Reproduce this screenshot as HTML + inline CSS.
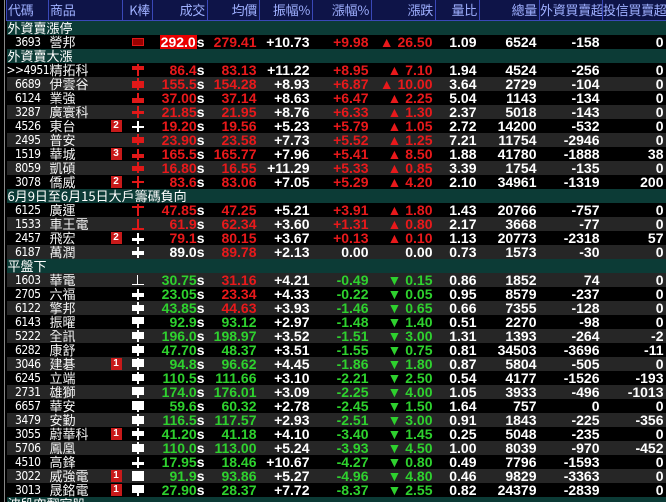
<!DOCTYPE html>
<html><head><meta charset="utf-8">
<style>
body{margin:0;background:#000;width:666px;height:502px;overflow:hidden;font-family:"Liberation Sans","Noto Sans CJK TC",sans-serif;}
#wrap{position:absolute;left:0;top:0;width:666px;height:502px;background:#000;overflow:hidden}
#lb{position:absolute;left:4px;top:0;width:1px;height:502px;background:#888}
table{position:absolute;left:6px;top:0;border-collapse:collapse;table-layout:fixed;width:660px}
tr{height:14px}
td{height:14px;padding:0 3px 0 0;white-space:nowrap;overflow:hidden;font-size:14px;font-weight:bold;color:#fff;text-align:right;line-height:14px}
tr.h{height:20px}
tr.h td{height:19px;background:#0e1448;color:#9fb0ff;font-weight:normal;font-size:13px;line-height:19px;border:1px solid #3a48b8;border-top:none;padding-right:2px;font-family:"Noto Sans CJK TC",sans-serif;letter-spacing:-0.3px}
tr.h td.l{text-align:left;padding-left:1px}
tr.s td{background:#0c3b36;color:#fff;font-weight:normal;text-align:left;padding-left:1px;font-family:"Noto Sans CJK TC",sans-serif;font-size:13px;line-height:14px}
tr.g td{background:#262626}
td.c{font-weight:normal;font-size:12px;color:#fff;text-align:right;padding-right:8px;font-family:"DejaVu Sans Condensed",sans-serif;letter-spacing:-0.5px}
td.n{font-weight:normal;text-align:left;position:relative;padding-left:1px;font-family:"Noto Sans CJK TC",sans-serif;font-size:13px;line-height:14px;color:#f4f4f4}
td.k{text-align:center;padding:0}
.b{position:absolute;left:62px;top:1px;width:11px;height:12px;background:#c81a1a;color:#fff;font-size:10px;font-weight:bold;line-height:12px;text-align:center;font-family:"Liberation Sans",sans-serif}
.r{color:#e8191b}.gr{color:#2ed12e}.w{color:#fff}
.s{color:#fff}
.hl{background:#e80000;color:#fff;padding:0 1px}
svg{display:block;margin:0 auto}
</style></head><body><div id="wrap"><div id="lb"></div>
<table>
<colgroup><col style="width:42px"><col style="width:74px"><col style="width:30px"><col style="width:55px"><col style="width:52px"><col style="width:53px"><col style="width:59px"><col style="width:64px"><col style="width:44px"><col style="width:60px"><col style="width:63px"><col style="width:64px"></colgroup>
<tr class="h"><td class="l">代碼</td><td class="l">商品</td><td>K棒</td><td>成交</td><td>均價</td><td>振幅%</td><td>漲幅%</td><td>漲跌</td><td>量比</td><td>總量</td><td>外資買賣超</td><td>投信買賣超</td></tr>
<tr class="s"><td colspan="12">外資賣漲停</td></tr>
<tr><td class="c">3693</td><td class="n">營邦</td><td class="k"><svg width="14" height="12"><rect x="1.5" y="2.5" width="11" height="7" fill="#900" stroke="#e01818"/></svg></td><td><span class="hl">292.0</span><span class="s">s</span></td><td class="r">279.41</td><td>+10.73</td><td class="r">+9.98</td><td class="r">▲ 26.50</td><td>1.09</td><td>6524</td><td>-158</td><td>0</td></tr>
<tr class="s"><td colspan="12">外資賣大漲</td></tr>
<tr><td class="c">&gt;&gt;4951</td><td class="n">精拓科</td><td class="k"><svg width="14" height="12"><rect x="1" y="2" width="12" height="4" fill="#e01818"/><rect x="6" y="0" width="2" height="12" fill="#e01818"/></svg></td><td class="r">86.4<span class="s">s</span></td><td class="r">83.13</td><td>+11.22</td><td class="r">+8.95</td><td class="r">▲ 7.10</td><td>1.94</td><td>4524</td><td>-256</td><td>0</td></tr>
<tr class="g"><td class="c">6689</td><td class="n">伊雲谷</td><td class="k"><svg width="14" height="12"><rect x="6" y="0" width="2" height="12" fill="#e01818"/><rect x="1" y="3" width="12" height="7" fill="#e01818"/></svg></td><td class="r">155.5<span class="s">s</span></td><td class="r">154.28</td><td>+8.93</td><td class="r">+6.87</td><td class="r">▲ 10.00</td><td>3.64</td><td>2729</td><td>-104</td><td>0</td></tr>
<tr><td class="c">6124</td><td class="n">業強</td><td class="k"><svg width="14" height="12"><rect x="6" y="1" width="2" height="10" fill="#e01818"/><rect x="1" y="6" width="12" height="5" fill="#e01818"/></svg></td><td class="r">37.00<span class="s">s</span></td><td class="r">37.14</td><td>+8.63</td><td class="r">+6.47</td><td class="r">▲ 2.25</td><td>5.04</td><td>1143</td><td>-134</td><td>0</td></tr>
<tr class="g"><td class="c">3287</td><td class="n">廣寰科</td><td class="k"><svg width="14" height="12"><rect x="6" y="0" width="2" height="12" fill="#e01818"/><rect x="1" y="5" width="12" height="3" fill="#e01818"/></svg></td><td class="r">21.85<span class="s">s</span></td><td class="r">21.95</td><td>+8.76</td><td class="r">+6.33</td><td class="r">▲ 1.30</td><td>2.37</td><td>5018</td><td>-143</td><td>0</td></tr>
<tr><td class="c">4526</td><td class="n">東台<span class="b">2</span></td><td class="k"><svg width="14" height="12"><rect x="6" y="1" width="2" height="11" fill="#fff"/><rect x="1" y="6" width="12" height="2" fill="#fff"/></svg></td><td class="r">19.20<span class="s">s</span></td><td class="r">19.56</td><td>+5.23</td><td class="r">+5.79</td><td class="r">▲ 1.05</td><td>2.72</td><td>14200</td><td>-532</td><td>0</td></tr>
<tr class="g"><td class="c">2495</td><td class="n">普安</td><td class="k"><svg width="14" height="12"><rect x="6" y="0" width="2" height="11" fill="#e01818"/><rect x="1" y="3" width="12" height="6" fill="#e01818"/></svg></td><td class="r">23.90<span class="s">s</span></td><td class="r">23.58</td><td>+7.73</td><td class="r">+5.52</td><td class="r">▲ 1.25</td><td>7.21</td><td>11754</td><td>-2946</td><td>0</td></tr>
<tr><td class="c">1519</td><td class="n">華城<span class="b">3</span></td><td class="k"><svg width="14" height="12"><rect x="6" y="1" width="2" height="11" fill="#e01818"/><rect x="1" y="6" width="12" height="4" fill="#e01818"/></svg></td><td class="r">165.5<span class="s">s</span></td><td class="r">165.77</td><td>+7.96</td><td class="r">+5.41</td><td class="r">▲ 8.50</td><td>1.88</td><td>41780</td><td>-1888</td><td>38</td></tr>
<tr class="g"><td class="c">8059</td><td class="n">凱碩</td><td class="k"><svg width="14" height="12"><rect x="6" y="0" width="2" height="11" fill="#e01818"/><rect x="1" y="4" width="12" height="5" fill="#e01818"/></svg></td><td class="r">16.80<span class="s">s</span></td><td class="r">16.55</td><td>+11.29</td><td class="r">+5.33</td><td class="r">▲ 0.85</td><td>3.39</td><td>1754</td><td>-135</td><td>0</td></tr>
<tr><td class="c">3078</td><td class="n">僑威<span class="b">2</span></td><td class="k"><svg width="14" height="12"><rect x="6" y="0" width="2" height="12" fill="#e01818"/><rect x="1" y="5" width="12" height="2" fill="#e01818"/></svg></td><td class="r">83.6<span class="s">s</span></td><td class="r">83.06</td><td>+7.05</td><td class="r">+5.29</td><td class="r">▲ 4.20</td><td>2.10</td><td>34961</td><td>-1319</td><td>200</td></tr>
<tr class="s"><td colspan="12">6月9日至6月15日大戶籌碼負向</td></tr>
<tr><td class="c">6125</td><td class="n">廣運</td><td class="k"><svg width="14" height="12"><rect x="1" y="2" width="12" height="2" fill="#e01818"/><rect x="6" y="0" width="2" height="12" fill="#e01818"/></svg></td><td class="r">47.85<span class="s">s</span></td><td class="r">47.25</td><td>+5.21</td><td class="r">+3.91</td><td class="r">▲ 1.80</td><td>1.43</td><td>20766</td><td>-757</td><td>0</td></tr>
<tr class="g"><td class="c">1533</td><td class="n">車王電</td><td class="k"><svg width="14" height="12"><rect x="6" y="1" width="2" height="10" fill="#e01818"/><rect x="1" y="10" width="12" height="2" fill="#e01818"/></svg></td><td class="r">61.9<span class="s">s</span></td><td class="r">62.34</td><td>+3.60</td><td class="r">+1.31</td><td class="r">▲ 0.80</td><td>2.17</td><td>3668</td><td>-77</td><td>0</td></tr>
<tr><td class="c">2457</td><td class="n">飛宏<span class="b">2</span></td><td class="k"><svg width="14" height="12"><rect x="6" y="1" width="2" height="11" fill="#fff"/><rect x="1" y="6" width="12" height="3" fill="#fff"/></svg></td><td class="r">79.1<span class="s">s</span></td><td class="r">80.15</td><td>+3.67</td><td class="r">+0.13</td><td class="r">▲ 0.10</td><td>1.13</td><td>20773</td><td>-2318</td><td>57</td></tr>
<tr class="g"><td class="c">6187</td><td class="n">萬潤</td><td class="k"><svg width="14" height="12"><rect x="6" y="1" width="2" height="11" fill="#fff"/><rect x="1" y="5" width="12" height="4" fill="#fff"/></svg></td><td>89.0<span class="s">s</span></td><td class="r">89.78</td><td>+2.13</td><td>0.00</td><td>0.00</td><td>0.73</td><td>1573</td><td>-30</td><td>0</td></tr>
<tr class="s"><td colspan="12">平盤下</td></tr>
<tr class="g"><td class="c">1603</td><td class="n">華電</td><td class="k"><svg width="14" height="12"><rect x="6" y="1" width="1" height="10" fill="#fff"/><rect x="1" y="10" width="12" height="1" fill="#fff"/></svg></td><td class="gr">30.75<span class="s">s</span></td><td class="r">31.16</td><td>+4.21</td><td class="gr">-0.49</td><td class="gr">▼ 0.15</td><td>0.86</td><td>1852</td><td>74</td><td>0</td></tr>
<tr><td class="c">2705</td><td class="n">六福</td><td class="k"><svg width="14" height="12"><rect x="6" y="1" width="2" height="11" fill="#fff"/><rect x="1" y="5" width="12" height="4" fill="#fff"/></svg></td><td class="gr">23.05<span class="s">s</span></td><td class="r">23.34</td><td>+4.33</td><td class="gr">-0.22</td><td class="gr">▼ 0.05</td><td>0.95</td><td>8579</td><td>-237</td><td>0</td></tr>
<tr class="g"><td class="c">6122</td><td class="n">擎邦</td><td class="k"><svg width="14" height="12"><rect x="6" y="0" width="2" height="12" fill="#fff"/><rect x="1" y="3" width="12" height="6" fill="#fff"/></svg></td><td class="gr">43.85<span class="s">s</span></td><td class="r">44.63</td><td>+3.93</td><td class="gr">-1.46</td><td class="gr">▼ 0.65</td><td>0.66</td><td>7355</td><td>-128</td><td>0</td></tr>
<tr><td class="c">6143</td><td class="n">振曜</td><td class="k"><svg width="14" height="12"><rect x="6" y="2" width="2" height="10" fill="#fff"/><rect x="1" y="1" width="12" height="7" fill="#fff"/></svg></td><td class="gr">92.9<span class="s">s</span></td><td class="gr">93.12</td><td>+2.97</td><td class="gr">-1.48</td><td class="gr">▼ 1.40</td><td>0.51</td><td>2270</td><td>-98</td><td>0</td></tr>
<tr class="g"><td class="c">5222</td><td class="n">全訊</td><td class="k"><svg width="14" height="12"><rect x="6" y="0" width="2" height="12" fill="#fff"/><rect x="1" y="2" width="12" height="7" fill="#fff"/></svg></td><td class="gr">196.0<span class="s">s</span></td><td class="gr">198.97</td><td>+3.52</td><td class="gr">-1.51</td><td class="gr">▼ 3.00</td><td>1.31</td><td>1393</td><td>-264</td><td>-2</td></tr>
<tr><td class="c">6282</td><td class="n">康舒</td><td class="k"><svg width="14" height="12"><rect x="6" y="0" width="2" height="12" fill="#fff"/><rect x="1" y="2" width="12" height="7" fill="#fff"/></svg></td><td class="gr">47.70<span class="s">s</span></td><td class="gr">48.37</td><td>+3.51</td><td class="gr">-1.55</td><td class="gr">▼ 0.75</td><td>0.81</td><td>34503</td><td>-3696</td><td>-11</td></tr>
<tr class="g"><td class="c">3046</td><td class="n">建碁<span class="b">1</span></td><td class="k"><svg width="14" height="12"><rect x="6" y="0" width="2" height="12" fill="#fff"/><rect x="1" y="1" width="12" height="8" fill="#fff"/></svg></td><td class="gr">94.8<span class="s">s</span></td><td class="gr">96.62</td><td>+4.45</td><td class="gr">-1.86</td><td class="gr">▼ 1.80</td><td>0.87</td><td>5804</td><td>-505</td><td>0</td></tr>
<tr><td class="c">6245</td><td class="n">立端</td><td class="k"><svg width="14" height="12"><rect x="6" y="0" width="2" height="12" fill="#fff"/><rect x="1" y="2" width="12" height="7" fill="#fff"/></svg></td><td class="gr">110.5<span class="s">s</span></td><td class="gr">111.66</td><td>+3.10</td><td class="gr">-2.21</td><td class="gr">▼ 2.50</td><td>0.54</td><td>4177</td><td>-1526</td><td>-193</td></tr>
<tr class="g"><td class="c">2731</td><td class="n">雄獅</td><td class="k"><svg width="14" height="12"><rect x="6" y="2" width="2" height="10" fill="#fff"/><rect x="1" y="1" width="12" height="8" fill="#fff"/></svg></td><td class="gr">174.0<span class="s">s</span></td><td class="gr">176.01</td><td>+3.09</td><td class="gr">-2.25</td><td class="gr">▼ 4.00</td><td>1.05</td><td>3933</td><td>-496</td><td>-1013</td></tr>
<tr><td class="c">6657</td><td class="n">華安</td><td class="k"><svg width="14" height="12"><rect x="6" y="2" width="2" height="10" fill="#fff"/><rect x="1" y="1" width="12" height="9" fill="#fff"/></svg></td><td class="gr">59.6<span class="s">s</span></td><td class="gr">60.32</td><td>+2.78</td><td class="gr">-2.45</td><td class="gr">▼ 1.50</td><td>1.64</td><td>757</td><td>0</td><td>0</td></tr>
<tr class="g"><td class="c">3479</td><td class="n">安勤</td><td class="k"><svg width="14" height="12"><rect x="6" y="0" width="2" height="12" fill="#fff"/><rect x="1" y="2" width="12" height="8" fill="#fff"/></svg></td><td class="gr">116.5<span class="s">s</span></td><td class="gr">117.57</td><td>+2.93</td><td class="gr">-2.51</td><td class="gr">▼ 3.00</td><td>0.91</td><td>1843</td><td>-225</td><td>-356</td></tr>
<tr><td class="c">3055</td><td class="n">蔚華科<span class="b">1</span></td><td class="k"><svg width="14" height="12"><rect x="6" y="0" width="2" height="12" fill="#fff"/><rect x="1" y="3" width="12" height="5" fill="#fff"/></svg></td><td class="gr">41.20<span class="s">s</span></td><td class="gr">41.18</td><td>+4.10</td><td class="gr">-3.40</td><td class="gr">▼ 1.45</td><td>0.25</td><td>5048</td><td>-235</td><td>0</td></tr>
<tr class="g"><td class="c">5706</td><td class="n">鳳凰</td><td class="k"><svg width="14" height="12"><rect x="6" y="0" width="2" height="12" fill="#fff"/><rect x="1" y="2" width="12" height="8" fill="#fff"/></svg></td><td class="gr">110.0<span class="s">s</span></td><td class="gr">113.00</td><td>+5.24</td><td class="gr">-3.93</td><td class="gr">▼ 4.50</td><td>1.00</td><td>8039</td><td>-970</td><td>-452</td></tr>
<tr><td class="c">4510</td><td class="n">高鋒</td><td class="k"><svg width="14" height="12"><rect x="6" y="1" width="2" height="11" fill="#fff"/><rect x="1" y="6" width="12" height="3" fill="#fff"/></svg></td><td class="gr">17.95<span class="s">s</span></td><td class="gr">18.46</td><td>+10.67</td><td class="gr">-4.27</td><td class="gr">▼ 0.80</td><td>0.49</td><td>7796</td><td>-1593</td><td>0</td></tr>
<tr class="g"><td class="c">3022</td><td class="n">威強電<span class="b">1</span></td><td class="k"><svg width="14" height="12"><rect x="1" y="1" width="12" height="10" fill="#fff"/></svg></td><td class="gr">91.9<span class="s">s</span></td><td class="gr">93.86</td><td>+5.27</td><td class="gr">-4.96</td><td class="gr">▼ 4.80</td><td>0.46</td><td>9829</td><td>-3363</td><td>0</td></tr>
<tr><td class="c">3013</td><td class="n">晟銘電<span class="b">1</span></td><td class="k"><svg width="14" height="12"><rect x="6" y="2" width="2" height="10" fill="#fff"/><rect x="1" y="1" width="12" height="8" fill="#fff"/></svg></td><td class="gr">27.90<span class="s">s</span></td><td class="gr">28.37</td><td>+7.72</td><td class="gr">-8.37</td><td class="gr">▼ 2.55</td><td>0.82</td><td>24379</td><td>-2839</td><td>0</td></tr>
<tr class="s"><td colspan="12">波段空翻寂股</td></tr>
</table></div></body></html>
